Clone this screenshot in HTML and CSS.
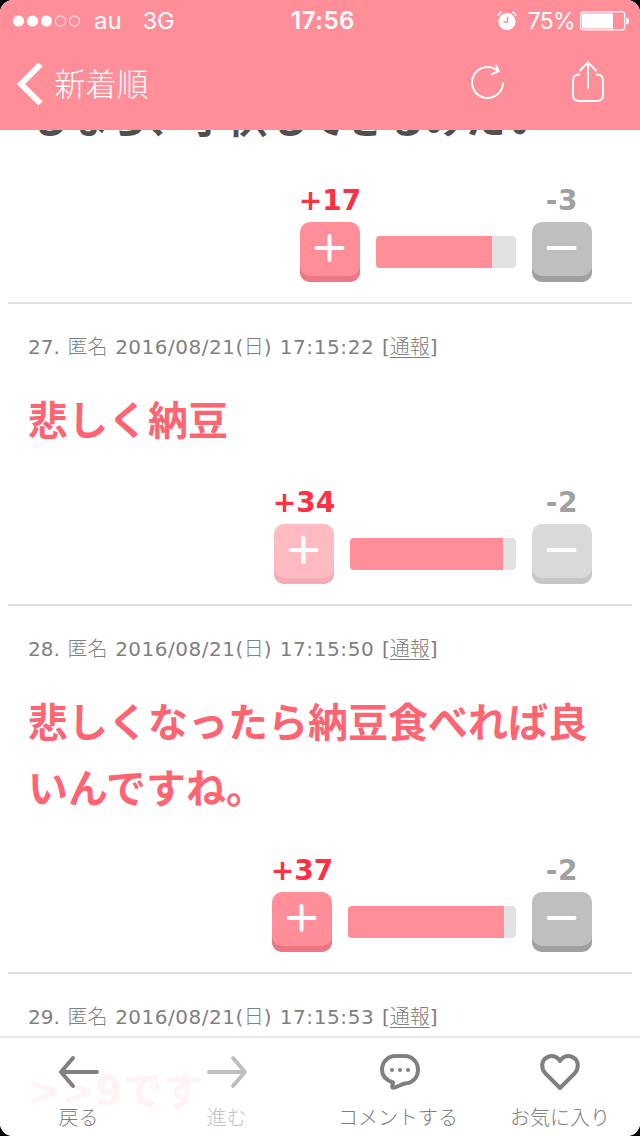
FILE: index.html
```html
<!DOCTYPE html>
<html lang="ja">
<head>
<meta charset="utf-8">
<title>新着順</title>
<link rel="stylesheet" href="styles.css">
</head>
<body>
<div class="screen">
  <header class="header">
    <div class="status">
      <div class="status-left">
        <svg class="signal" width="68" height="14" viewBox="0 0 68 14"><g fill="#fff"><circle cx="5.5" cy="7" r="5.6"/><circle cx="19.5" cy="7" r="5.6"/><circle cx="33.5" cy="7" r="5.6"/></g><g fill="none" stroke="#fff"><circle cx="47.5" cy="7" r="5.1"/><circle cx="61.5" cy="7" r="5.1"/></g></svg>
        <span class="carrier">au</span><span class="network">3G</span>
      </div>
      <div class="clock">17:56</div>
      <div class="status-right">
        <svg class="alarm" width="20" height="20" viewBox="0 0 20 20"><circle cx="10" cy="10.500" r="8.600" fill="#fff"/><path d="M1 4.800Q1.800 1.600 5 1M15 1Q18.200 1.600 19 4.800" fill="none" stroke="#fff" stroke-width="1.500"/><path d="M10.500 5.500V11H6.500" fill="none" stroke="#ff8e99" stroke-width="1.500"/></svg>
        <span class="percent">75%</span>
        <svg class="battery" width="50" height="20" viewBox="0 0 50 20"><rect x=".7" y=".9" width="44" height="18" rx="2.500" fill="none" stroke="#fff" stroke-width="1.200"/><rect x="2" y="2.500" width="31" height="15" rx="1" fill="#fff"/><path d="M46.200 6.500Q49 7 49 10T46.200 13.500Z" fill="#fff"/></svg>
      </div>
    </div>
    <nav class="nav">
      <svg width="28" height="44" viewBox="0 0 28 44"><path d="M24.500 2.500L5 22L24.500 41.500" fill="none" stroke="#fff" stroke-width="6"/></svg>
      <span class="nav-title">新着順</span>
      <svg class="reload" width="36" height="40" viewBox="0 0 36 40"><path d="M33 20.500A15.500 15.500 0 1 1 28.500 9.600" fill="none" stroke="#fff" stroke-width="2"/><path d="M26 3L28.700 9.300L21 12.500" fill="none" stroke="#fff" stroke-width="2"/></svg>
      <svg class="share" width="34" height="42" viewBox="0 0 34 42"><path d="M9 13.500H8Q2 13.500 2 19.500V34Q2 40 8 40H26Q32 40 32 34V19.500Q32 13.500 26 13.500H25M17 27.500V2M8.500 10L17 1.500L25.500 10" fill="none" stroke="#fff" stroke-width="2"/></svg>
    </nav>
  </header>

  <main class="feed">
    <article class="comment comment-scrolled">
      <p class="text text-plain">もなら、子供もできるみたい</p>
      <div class="votes">
        <div class="vote"><span class="count plus-count">+17</span><button class="btn plus"><svg width="32" height="32" viewBox="0 0 32 32"><path d="M3.500 16H29.500M16.500 4V28"/></svg></button></div>
        <div class="bar" style="width:140px"><div class="fill" style="width:116px"></div></div>
        <div class="vote"><span class="count minus-count">-3</span><button class="btn minus"><svg width="32" height="32" viewBox="0 0 32 32"><path d="M3.500 16H29.500"/></svg></button></div>
      </div>
    </article>
    <article class="comment">
      <div class="meta">27. <span class="kanji">匿名</span> <span class="date">2016/08/21(<span class="kanji">日</span>)</span> <span class="time">17:15:22</span> [<a class="kanji">通報</a>]</div>
      <p class="text">悲しく納豆</p>
      <div class="votes">
        <div class="vote"><span class="count plus-count">+34</span><button class="btn plus voted"><svg width="32" height="32" viewBox="0 0 32 32"><path d="M3.500 16H29.500M16.500 4V28"/></svg></button></div>
        <div class="bar" style="width:166px"><div class="fill" style="width:153px"></div></div>
        <div class="vote"><span class="count minus-count">-2</span><button class="btn minus voted"><svg width="32" height="32" viewBox="0 0 32 32"><path d="M3.500 16H29.500"/></svg></button></div>
      </div>
    </article>
    <article class="comment">
      <div class="meta">28. <span class="kanji">匿名</span> <span class="date">2016/08/21(<span class="kanji">日</span>)</span> <span class="time">17:15:50</span> [<a class="kanji">通報</a>]</div>
      <p class="text">悲しくなったら納豆食べれば良いんですね。</p>
      <div class="votes">
        <div class="vote"><span class="count plus-count">+37</span><button class="btn plus"><svg width="32" height="32" viewBox="0 0 32 32"><path d="M3.500 16H29.500M16.500 4V28"/></svg></button></div>
        <div class="bar" style="width:168px"><div class="fill" style="width:156px"></div></div>
        <div class="vote"><span class="count minus-count">-2</span><button class="btn minus"><svg width="32" height="32" viewBox="0 0 32 32"><path d="M3.500 16H29.500"/></svg></button></div>
      </div>
    </article>
    <article class="comment">
      <div class="meta">29. <span class="kanji">匿名</span> <span class="date">2016/08/21(<span class="kanji">日</span>)</span> <span class="time">17:15:53</span> [<a class="kanji">通報</a>]</div>
      <p class="text">&gt;&gt;9です</p>
    </article>
  </main>

  <footer class="tabs">
    <div class="tab tab-back"><svg width="42" height="40" viewBox="0 0 42 40"><path d="M39 20H3M15 6L3 20L15 34"/></svg><span>戻る</span></div>
    <div class="tab tab-next"><svg width="42" height="40" viewBox="0 0 42 40"><path d="M3 20H39M27 6L39 20L27 34"/></svg><span>進む</span></div>
    <div class="tab tab-comment"><svg width="42" height="40" viewBox="0 0 42 40"><path d="M17 4H25C33 4 39 9.500 39 18C39 26 33 31 26 31.500C22 32.500 18 35 14.500 35.800C13 36 13 34.500 13.500 33L14 30.500C7 28 3 23.500 3 18C3 9.500 9 4 17 4Z"/><g class="dots"><circle cx="13" cy="18" r="2"/><circle cx="21" cy="18" r="2"/><circle cx="29" cy="18" r="2"/></g></svg><span>コメントする</span></div>
    <div class="tab tab-fav"><svg width="42" height="40" viewBox="0 0 42 40"><path d="M21 36L6.500 21.500C1.500 16 2.500 9 7 6C12 2.500 18 4 21 9C24 4 30 2.500 35 6C39.500 9 40.500 16 35.500 21.500Z"/></svg><span>お気に入り</span></div>
  </footer>
</div>
</body>
</html>
```
FILE: styles.css
```css
* { box-sizing: border-box; }
body { margin: 0; background: #000; }
.screen {
  position: relative;
  display: flex;
  flex-direction: column;
  width: 640px;
  height: 1136px;
  overflow: hidden;
  border-radius: 13px;
  background: #fff;
  font-family: "DejaVu Sans", "Noto Sans CJK JP", sans-serif;
}
.header { flex: none; height: 130px; background: #ff8e99; color: #fff; }
.status {
  display: grid;
  grid-template-columns: 1fr auto 1fr;
  height: 40px;
  padding: 1px 10px 0 13px;
  font: 24px/40px Inter, sans-serif;
}
.status-left, .status-right { display: flex; align-items: center; }
.status-right { justify-content: flex-end; }
.carrier { margin-left: 13px; }
.network { margin-left: 21px; font-size: 23.5px; letter-spacing: -.3px; }
.clock { font-weight: 600; letter-spacing: .5px; padding-left: 3px; }
.percent { margin: 0 5px 0 11px; font-size: 23px; letter-spacing: -.7px; }
.nav { display: flex; align-items: center; height: 88px; padding: 0 35px 0 16px; }
.nav-title {
  margin: -4px auto 0 10px;
  font: 300 31.5px/44px "Noto Sans CJK JP", sans-serif;
}
.share { margin-left: 65px; margin-top: -4px; }
.reload { margin-top: -4px; }

.feed { flex: 1; min-height: 0; overflow: hidden; }
.comment {
  margin: 0 8px;
  padding: 28px 40px 20px 20px;
  border-bottom: 2px solid #e2e2e2;
}
.comment-scrolled { margin-top: -44px; padding-top: 0; }
.meta {
  height: 30px;
  margin-bottom: 26px;
  font-size: 20px;
  line-height: 30px;
  color: #808080;
  white-space: nowrap;
  word-spacing: 1.3px;
}
.kanji { font-family: "Noto Sans CJK JP", sans-serif; font-weight: 300; line-height: 1; letter-spacing: 0; }
.date { letter-spacing: .5px; }
.time { letter-spacing: .6px; }
.meta a { text-decoration: underline; text-decoration-thickness: 1px; text-underline-offset: 3px; }
.text {
  margin: 0 -20px 32px 0;
  font-size: 40px;
  font-weight: 700;
  line-height: 66px;
  color: #ff6473;
}
.text-plain { color: #4f4f4f; }
.votes { display: flex; justify-content: flex-end; align-items: flex-end; gap: 16px; }
.vote { display: flex; flex-direction: column; align-items: center; gap: 5px; width: 60px; }
.count { margin-top: 1px; font-size: 28px; font-weight: 700; line-height: 32px; white-space: nowrap; }
.plus-count { color: #ff3041; }
.minus-count { color: #a0a0a0; letter-spacing: .8px; }
.btn {
  display: flex;
  justify-content: center;
  width: 60px;
  height: 60px;
  padding: 10px 2px 0 0;
  border: 0;
  border-radius: 10px;
  align-items: flex-start;
}
.btn svg { flex: none; fill: none; stroke: #fff; stroke-width: 4; stroke-linecap: round; }
.plus { background: #ff8e99; box-shadow: inset 0 -6px #eb7784; }
.minus { background: #bfbfbf; box-shadow: inset 0 -6px #a0a0a0; }
.plus.voted { background: #ffbac2; box-shadow: inset 0 -6px #f4acb5; }
.minus.voted { background: #d9d9d9; box-shadow: inset 0 -6px #c6c6c6; }
.bar { height: 32px; margin-bottom: 14px; border-radius: 4px; overflow: hidden; background: #e2e2e2; }
.fill { height: 100%; background: #ff8e99; }

.tabs {
  position: absolute;
  left: 0;
  right: 0;
  bottom: 0;
  display: grid;
  grid-template-columns: 157px 139px 204px 120px;
  height: 100px;
  border-top: 2px solid #e9e9e9;
  background: rgba(255, 255, 255, .92);
}
.tab {
  display: flex;
  flex-direction: column;
  align-items: center;
  padding-top: 14px;
  font: 300 20px/30px "Noto Sans CJK JP", sans-serif;
  color: #808080;
}
.tab span { margin-top: 10px; }
.tab svg { fill: none; stroke: #808080; stroke-width: 4; stroke-linecap: round; stroke-linejoin: round; }
.tab .dots { fill: #808080; stroke: none; }
.tab-comment svg { margin-left: 4px; }
.tab-next { color: #c2c2c2; }
.tab-next svg { stroke: #bfbfbf; }
```
